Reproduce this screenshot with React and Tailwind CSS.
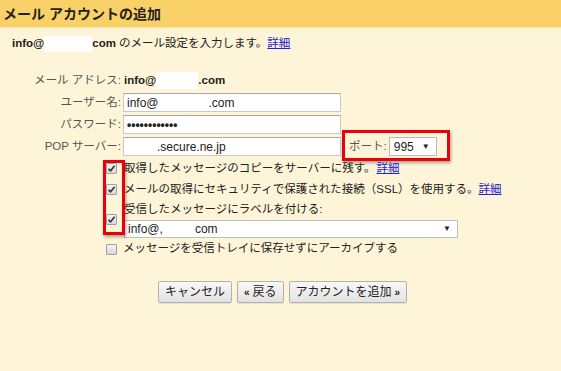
import React from 'react';

const font = { fontFamily: '"Liberation Sans", "Noto Sans CJK JP", sans-serif' };

function Check({ checked }) {
  return (
    <span className="inline-flex h-[11px] w-[11px] items-center justify-center rounded-[1px] border border-[#a0a0a0] bg-gradient-to-b from-[#f4f4f4] to-[#d8d8d8]">
      {checked && (
        <svg width="9" height="9" viewBox="0 0 9 9">
          <path d="M1.5 4.8 L3.6 6.8 L7.6 1.8" fill="none" stroke="#333" strokeWidth="1.6" />
        </svg>
      )}
    </span>
  );
}

function Redact({ w, h = 16 }) {
  return <span className="inline-block bg-white" style={{ width: w, height: h }} />;
}

function Field({ label, children }) {
  return (
    <div className="flex h-[19px] items-center">
      <div className="w-[121px] shrink-0 text-right text-[#555]">{label}</div>
      <div className="ml-[2px] flex items-center">{children}</div>
    </div>
  );
}

const inputCls =
  'flex h-[19px] w-[218px] items-center overflow-hidden border border-[#c8c8c8] border-t-[#a8a8a8] bg-white pl-[3px] text-[12px] text-[#222]';

export default function App() {
  return (
    <div className="h-[371px] w-[561px] overflow-hidden bg-[#fef5d8] text-[11.5px] text-[#222]" style={font}>
      {/* title bar */}
      <div className="h-[28px] border-b border-[#fbe3a0] bg-[#f9d168] pl-[3px] text-[14px] font-bold leading-[28px] text-[#222]">
        メール アカウントの追加
      </div>

      <div className="mt-[7px] flex h-[17px] items-center pl-[12px] text-[11.5px]">
        <span className="font-bold">info@</span>
        <Redact w={48} h={16} />
        <span className="font-bold">com</span>
        <span className="ml-[3px]">のメール設定を入力します。</span>
        <a className="text-[#2323d6] underline">詳細</a>
      </div>

      {/* account fields */}
      <div className="mt-[19px] flex flex-col gap-[3px]">
        <Field label="メール アドレス:">
          <span className="pl-[1px] font-bold">info@</span>
          <Redact w={42} h={17} />
          <span className="font-bold">.com</span>
        </Field>
        <Field label="ユーザー名:">
          <div className={inputCls}>
            <span>info@</span>
            <Redact w={50} h={16} />
            <span>.com</span>
          </div>
        </Field>
        <Field label="パスワード:">
          <div className={inputCls}>
            <span className="text-[12px] font-bold tracking-[0px]">••••••••••••</span>
          </div>
        </Field>
        <Field label="POP サーバー:">
          <div className={inputCls}>
            <Redact w={30} h={16} />
            <span>.secure.ne.jp</span>
          </div>
          <div className="relative ml-[8px] flex items-center">
            <span className="text-[#555]">ポート:</span>
            <div className="ml-[2px] flex h-[19px] w-[48px] items-center justify-between border border-[#b8b8b8] bg-white pl-[4px] pr-[6px] text-[12px]">
              <span>995</span>
              <span className="text-[8px]">▼</span>
            </div>
            <div className="pointer-events-none absolute -bottom-[5px] -left-[7px] -right-[13px] -top-[7px] border-[3px] border-[#e8000d] shadow-[1px_2px_3px_rgba(0,0,0,0.35)]" />
          </div>
        </Field>
      </div>

      {/* options */}
      <div className="relative mt-[2px] flex">
        <div className="pointer-events-none absolute left-[103px] top-[2px] h-[75px] w-[22px] border-[3px] border-[#e8000d] shadow-[1px_2px_3px_rgba(0,0,0,0.35)]" />
        <div className="flex flex-col">
          <div className="flex h-[21px] items-center">
            <div className="flex w-[124px] justify-end pr-[7px]"><Check checked /></div>
            <span>取得したメッセージのコピーをサーバーに残す。</span>
            <a className="ml-[1px] text-[#2323d6] underline">詳細</a>
          </div>
          <div className="flex h-[21px] items-center">
            <div className="flex w-[124px] justify-end pr-[7px]"><Check checked /></div>
            <span>メールの取得にセキュリティで保護された接続（SSL）を使用する。</span>
            <a className="text-[#2323d6] underline">詳細</a>
          </div>
          <div className="flex items-center">
            <div className="flex w-[124px] justify-end pr-[7px]"><Check checked /></div>
            <div className="flex flex-col">
              <div className="flex h-[20px] items-center">受信したメッセージにラベルを付ける:</div>
              <div className="flex h-[18px] w-[334px] items-center justify-between border border-[#c0c0c0] bg-white pl-[3px] pr-[6px] text-[12px]">
                <span className="flex items-center">
                  info@,
                  <Redact w={16} h={15} />
                  <span className="ml-[16px]">com</span>
                </span>
                <span className="text-[8px]">▼</span>
              </div>
            </div>
          </div>
          <div className="mt-[1px] flex h-[20px] items-center">
            <div className="flex w-[123px] justify-end pr-[6px]"><Check /></div>
            <span>メッセージを受信トレイに保存せずにアーカイブする</span>
          </div>
        </div>
      </div>

      {/* buttons */}
      <div className="mt-[22px] flex gap-[5px] pl-[158px]">
        {[
          ['', 'キャンセル', ''],
          ['«', '戻る', ''],
          ['', 'アカウントを追加', '»'],
        ].map(([pre, t, post]) => (
          <button
            key={t}
            className="flex h-[22px] items-center gap-[3px] rounded-[2px] border border-[#b0b0b0] bg-gradient-to-b from-[#f8f8f8] to-[#e2e2e2] px-[6px] text-[12px] text-[#222] shadow-[0_1px_0_rgba(0,0,0,0.08)]"
            style={font}
          >
            {pre && <span className="text-[10px] font-bold">{pre}</span>}
            <span>{t}</span>
            {post && <span className="text-[10px] font-bold">{post}</span>}
          </button>
        ))}
      </div>
    </div>
  );
}
